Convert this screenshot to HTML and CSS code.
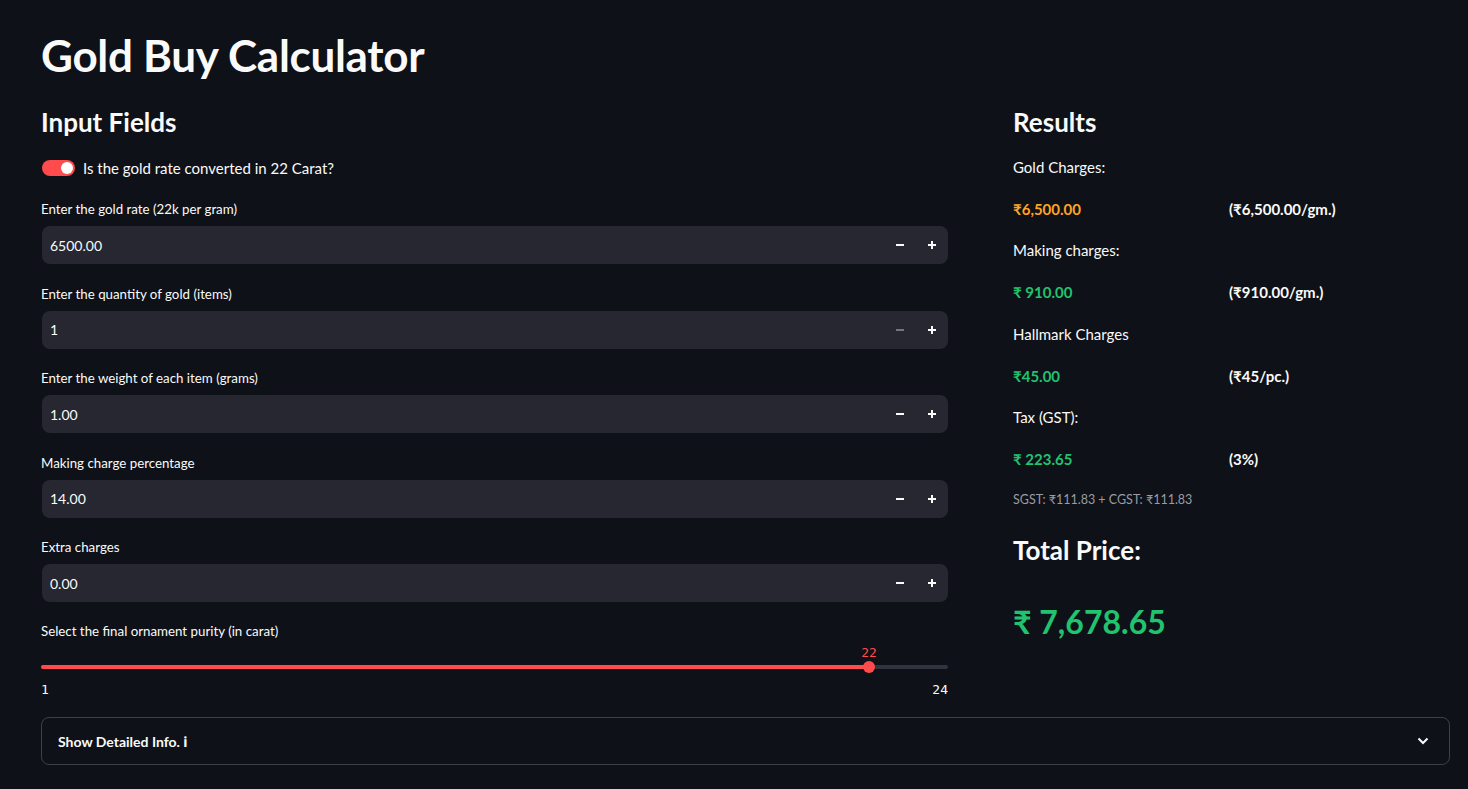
FILE: index.html
```html
<!DOCTYPE html>
<html lang="en">
<head>
<meta charset="utf-8">
<title>Gold Buy Calculator</title>
<link rel="stylesheet" href="styles.css">
</head>
<body>
<main class="app">
  <h1 class="title">Gold Buy Calculator</h1>
  <div class="columns">
    <section class="col-left">
      <h3 class="subhead">Input Fields</h3>
      <div class="toggle-row">
        <span class="toggle"><span class="knob"></span></span>
        <span class="toggle-label">Is the gold rate converted in 22 Carat?</span>
      </div>

      <div class="field">
        <label class="label">Enter the gold rate (22k per gram)</label>
        <div class="numinput">
          <span class="value">6500.00</span>
          <span class="btn"><svg viewBox="0 0 10 10" width="10" height="10"><path d="M1 5h8" stroke="currentColor" stroke-width="2"/></svg></span>
          <span class="btn"><svg viewBox="0 0 10 10" width="10" height="10"><path d="M1 5h8M5 1v8" stroke="currentColor" stroke-width="2"/></svg></span>
        </div>
      </div>

      <div class="field">
        <label class="label">Enter the quantity of gold (items)</label>
        <div class="numinput">
          <span class="value">1</span>
          <span class="btn disabled"><svg viewBox="0 0 10 10" width="10" height="10"><path d="M1 5h8" stroke="currentColor" stroke-width="2"/></svg></span>
          <span class="btn"><svg viewBox="0 0 10 10" width="10" height="10"><path d="M1 5h8M5 1v8" stroke="currentColor" stroke-width="2"/></svg></span>
        </div>
      </div>

      <div class="field">
        <label class="label">Enter the weight of each item (grams)</label>
        <div class="numinput">
          <span class="value">1.00</span>
          <span class="btn"><svg viewBox="0 0 10 10" width="10" height="10"><path d="M1 5h8" stroke="currentColor" stroke-width="2"/></svg></span>
          <span class="btn"><svg viewBox="0 0 10 10" width="10" height="10"><path d="M1 5h8M5 1v8" stroke="currentColor" stroke-width="2"/></svg></span>
        </div>
      </div>

      <div class="field">
        <label class="label">Making charge percentage</label>
        <div class="numinput">
          <span class="value">14.00</span>
          <span class="btn"><svg viewBox="0 0 10 10" width="10" height="10"><path d="M1 5h8" stroke="currentColor" stroke-width="2"/></svg></span>
          <span class="btn"><svg viewBox="0 0 10 10" width="10" height="10"><path d="M1 5h8M5 1v8" stroke="currentColor" stroke-width="2"/></svg></span>
        </div>
      </div>

      <div class="field">
        <label class="label">Extra charges</label>
        <div class="numinput">
          <span class="value">0.00</span>
          <span class="btn"><svg viewBox="0 0 10 10" width="10" height="10"><path d="M1 5h8" stroke="currentColor" stroke-width="2"/></svg></span>
          <span class="btn"><svg viewBox="0 0 10 10" width="10" height="10"><path d="M1 5h8M5 1v8" stroke="currentColor" stroke-width="2"/></svg></span>
        </div>
      </div>

      <div class="field slider-field">
        <label class="label">Select the final ornament purity (in carat)</label>
        <div class="slider">
          <div class="track">
            <div class="fill" style="width: 91.3%"></div>
            <div class="thumb" style="left: 91.3%"><span class="thumb-val">22</span></div>
          </div>
          <div class="ticks"><span>1</span><span>24</span></div>
        </div>
      </div>
    </section>

    <section class="col-right">
      <h3 class="subhead">Results</h3>
      <p class="rlabel">Gold Charges:</p>
      <div class="rrow"><span class="amt orange">₹6,500.00</span><span class="amt">(₹6,500.00/gm.)</span></div>
      <p class="rlabel">Making charges:</p>
      <div class="rrow"><span class="amt green">₹ 910.00</span><span class="amt">(₹910.00/gm.)</span></div>
      <p class="rlabel">Hallmark Charges</p>
      <div class="rrow"><span class="amt green">₹45.00</span><span class="amt">(₹45/pc.)</span></div>
      <p class="rlabel">Tax (GST):</p>
      <div class="rrow"><span class="amt green">₹ 223.65</span><span class="amt">(3%)</span></div>
      <p class="caption">SGST: ₹111.83 + CGST: ₹111.83</p>
      <h3 class="total-head">Total Price:</h3>
      <p class="total">₹ 7,678.65</p>
    </section>
  </div>

  <div class="expander">
    <span class="exp-title">Show Detailed Info. ℹ</span>
    <svg class="chev" viewBox="0 0 12 8" width="12" height="8"><path d="M1.5 1.5l4.5 4.5 4.5-4.5" fill="none" stroke="currentColor" stroke-width="2"/></svg>
  </div>
</main>
</body>
</html>
```

FILE: styles.css
```css
* { box-sizing: border-box; }
html, body {
  margin: 0;
  padding: 0;
  background: #0e1117;
  color: #fafafa;
  font-family: Lato, "Noto Sans", "Liberation Sans", sans-serif;
}
.app {
  padding: 28px 18px 0 41px;
}
.title {
  margin: 0;
  font-size: 44px;
  font-weight: 700;
  line-height: 54px;
  letter-spacing: -0.3px;
}
.columns {
  display: grid;
  grid-template-columns: 907fr 437fr;
  column-gap: 65px;
  margin-top: 20px;
}
.subhead {
  margin: 0;
  font-size: 26px;
  font-weight: 700;
  line-height: 40px;
}
.toggle-row {
  display: flex;
  align-items: center;
  gap: 8px;
  margin-top: 15px;
  height: 22px;
}
.toggle {
  width: 33px;
  height: 16px;
  border-radius: 8px;
  background: #ff4b4b;
  display: flex;
  align-items: center;
  justify-content: flex-end;
  padding-right: 2px;
  margin-left: 1px;
}
.knob {
  width: 12px;
  height: 12px;
  border-radius: 50%;
  background: #fff;
}
.toggle-label {
  font-size: 15px;
}
.field {
  margin-top: 15.5px;
}
.toggle-row + .field { margin-top: 16px; }
.label {
  display: block;
  font-size: 13.3px;
  line-height: 20px;
  height: 31px;
  padding-top: 4px;
}
.numinput {
  display: flex;
  align-items: center;
  height: 38px;
  background: #262730;
  border-radius: 8px;
  margin-left: 1px;
}
.value {
  flex: 1;
  padding-left: 8px;
  font-size: 14px;
}
.btn {
  width: 32px;
  height: 38px;
  display: flex;
  align-items: center;
  justify-content: center;
  color: #fafafa;
}
.btn.disabled { color: #73757f; }
.field.slider-field { margin-top: 15px; }
.slider {
  padding-top: 17px;
}
.track {
  position: relative;
  height: 4px;
  background: #31333f;
  border-radius: 2px;
}
.fill {
  height: 4px;
  background: #ff4b4b;
  border-radius: 2px;
}
.thumb {
  position: absolute;
  top: -4px;
  width: 12px;
  height: 12px;
  margin-left: -6px;
  border-radius: 50%;
  background: #ff4b4b;
}
.thumb-val {
  position: absolute;
  bottom: 13px;
  left: 50%;
  transform: translateX(-50%);
  font-family: "DejaVu Sans Mono", "Liberation Mono", monospace;
  font-size: 13px;
  color: #ff4b4b;
}
.ticks {
  display: flex;
  justify-content: space-between;
  font-family: "DejaVu Sans Mono", "Liberation Mono", monospace;
  font-size: 13px;
  margin-top: 13px;
}
.rlabel {
  margin: 0;
  margin-top: 19.4px;
  font-size: 15px;
  line-height: 22px;
}
.subhead + .rlabel { margin-top: 14px; }
.rrow {
  display: grid;
  grid-template-columns: 216px 1fr;
  margin-top: 20px;
  font-size: 15px;
  line-height: 22px;
  font-weight: 700;
}
.orange { color: #ffa421; }
.green { color: #21c36f; }
.caption {
  margin: 20px 0 0;
  font-size: 12.5px;
  color: #9a9ca3;
  line-height: 20px;
}
.total-head {
  margin: 22px 0 0;
  font-size: 26px;
  font-weight: 700;
  line-height: 36px;
}
.total {
  margin: 32px 0 0;
  font-size: 32px;
  font-weight: 700;
  color: #21c36f;
  line-height: 44px;
}
.expander {
  margin-top: 20px;
  height: 48px;
  border: 1px solid rgba(250,250,250,0.2);
  border-radius: 8px;
  display: flex;
  align-items: center;
  justify-content: space-between;
  padding: 0 20px 0 16px;
}
.exp-title {
  font-size: 14px;
  font-weight: 700;
}
.chev { color: #fafafa; }
```
